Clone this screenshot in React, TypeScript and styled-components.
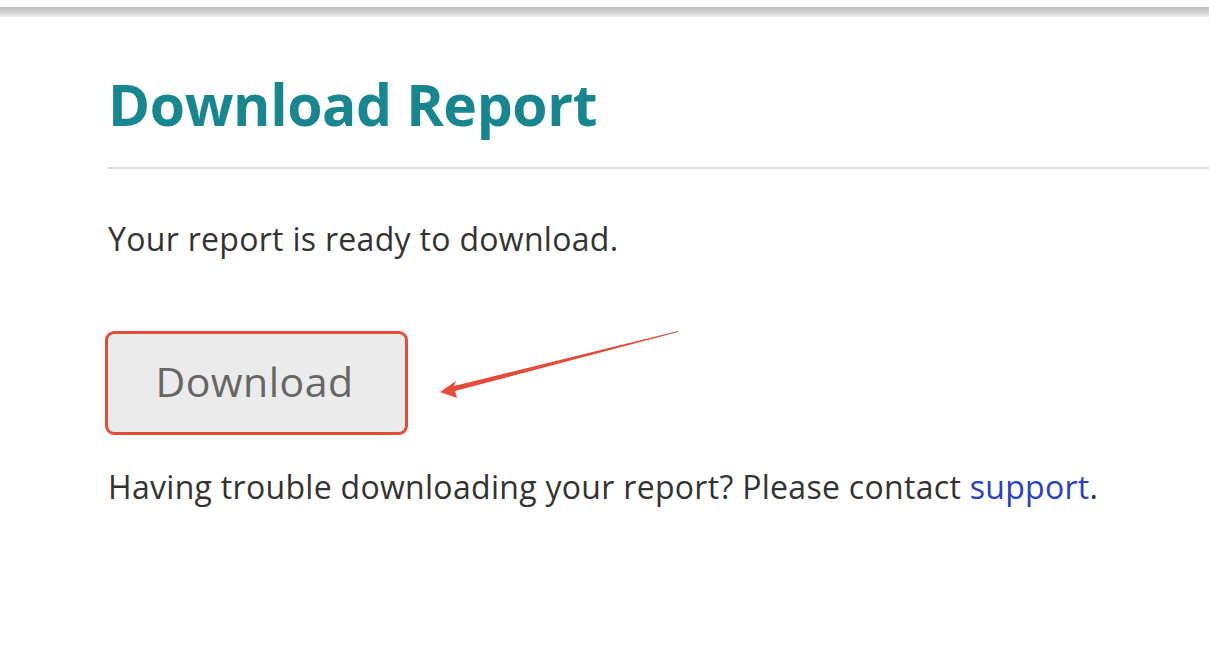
import React from "react";
import styled, { createGlobalStyle } from "styled-components";

const Global = createGlobalStyle`
  html, body { margin: 0; padding: 0; background: #fff; }
  body { font-family: "Open Sans", "Liberation Sans", sans-serif; }
`;

const Page = styled.div`
  position: relative;
  width: 1209px;
  height: 651px;
  overflow: hidden;
  background: #fff;
`;

const TopBar = styled.div`
  margin-top: 7px;
  height: 10px;
  background: linear-gradient(to bottom, #bdbdbd 0%, #d0d0d0 50%, #ececec 100%);
`;

const Content = styled.main`
  padding: 52px 0 0 108px;
  display: flex;
  flex-direction: column;
`;

const Title = styled.h1`
  margin: 0;
  font-family: "Open Sans", "Liberation Sans", sans-serif;
  font-weight: 700;
  font-size: 57px;
  line-height: 70px;
  letter-spacing: -0.4px;
  color: #17868f;
`;

const Divider = styled.hr`
  margin: 28px 0 0 0;
  border: none;
  height: 2px;
  background: #dcdcdc;
`;

const Text = styled.p`
  margin: 0;
  font-size: 32px;
  line-height: 40px;
  letter-spacing: 0.3px;
  color: #333;
`;

const Lead = styled(Text)`
  margin-top: 50px;
`;

const ButtonWrap = styled.div`
  margin-top: 72px;
  margin-left: -3px;
  width: 303px;
  height: 104px;
  box-sizing: border-box;
  border: 3px solid #e34c3a;
  border-radius: 9px;
  background: #ebebeb;
  display: flex;
  align-items: center;
  justify-content: center;
`;

const ButtonLabel = styled.span`
  font-size: 41px;
  letter-spacing: 0.5px;
  color: #666;
  margin-left: -4px;
  margin-top: -4px;
`;

const Help = styled(Text)`
  margin-top: 32px;
`;

const Link = styled.a`
  color: #2541c7;
  text-decoration: none;
`;

const Arrow = styled.svg`
  position: absolute;
  left: 0;
  top: 0;
  pointer-events: none;
`;

export default function App() {
  return (
    <Page>
      <Global />
      <TopBar />
      <Content>
        <Title>Download Report</Title>
        <Divider />
        <Lead>Your report is ready to download.</Lead>
        <ButtonWrap>
          <ButtonLabel>Download</ButtonLabel>
        </ButtonWrap>
        <Help>
          Having trouble downloading your report? Please contact <Link href="#">support</Link>.
        </Help>
      </Content>
      <Arrow width="1209" height="651" viewBox="0 0 1209 651">
        <path
          d="M678 331 L454 386 L456 381 L440 392 L457 398 L455 391 L678 332 Z"
          fill="#e34c3a"
        />
      </Arrow>
    </Page>
  );
}
